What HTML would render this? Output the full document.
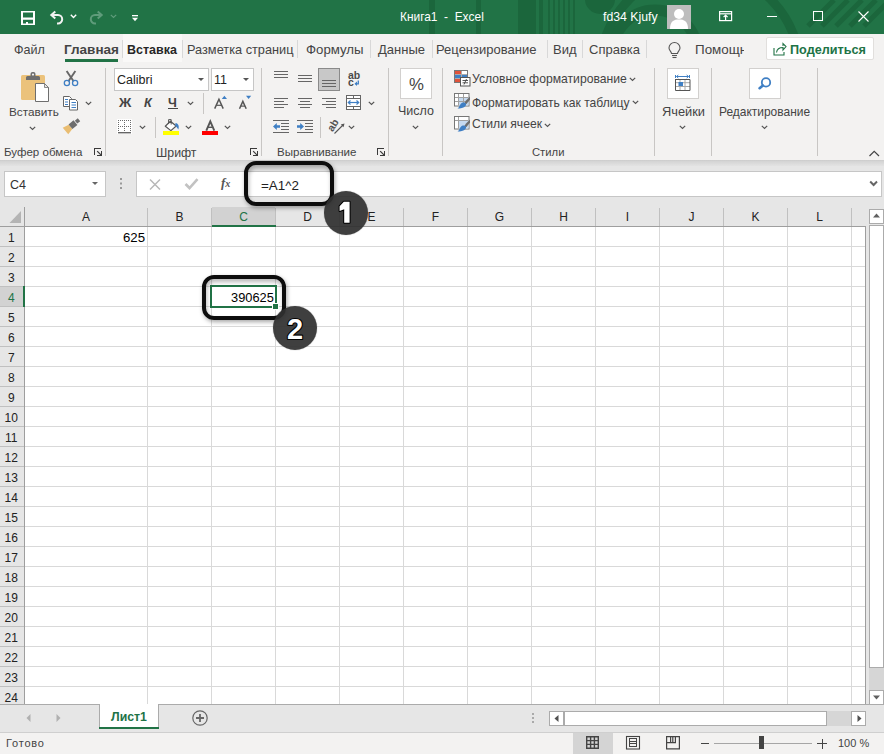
<!DOCTYPE html><html><head><meta charset="utf-8"><style>
*{margin:0;padding:0;box-sizing:border-box}
html,body{width:884px;height:754px;overflow:hidden;background:#f3f2f1;font-family:"Liberation Sans",sans-serif;position:relative}
.a{position:absolute}
.t{position:absolute;white-space:nowrap;line-height:1}
svg{position:absolute;overflow:visible}
</style></head><body>
<div class="a" style="left:0;top:0;width:884px;height:34px;background:#217346;overflow:hidden">
<svg style="left:0;top:0" width="884" height="34"><g fill="#1b663c"><rect x="429" y="0" width="6" height="34"/><rect x="476" y="0" width="5" height="34"/><rect x="518" y="0" width="18" height="34"/><rect x="539" y="0" width="4" height="34"/><rect x="548" y="0" width="2" height="34"/><rect x="553" y="0" width="2" height="34"/><rect x="558" y="0" width="2" height="34"/><rect x="563" y="0" width="2" height="34"/><rect x="568" y="0" width="2" height="34"/><rect x="573" y="0" width="2" height="34"/><circle cx="600" cy="-1" r="15"/></g><g fill="none" stroke="#1b663c"><circle cx="655" cy="52" r="42" stroke-width="11"/><circle cx="700" cy="70" r="100" stroke-width="9"/></g><g stroke="#1b663c" stroke-width="5"><line x1="808" y1="26" x2="834" y2="0"/><line x1="822" y1="26" x2="848" y2="0"/><line x1="836" y1="26" x2="862" y2="0"/><line x1="850" y1="26" x2="876" y2="0"/><line x1="864" y1="26" x2="890" y2="0"/></g></svg>
</div>
<svg style="left:21px;top:11px" width="14" height="14"><path fill="#fff" fill-rule="evenodd" d="M0 0 H14 V14 H0Z M2 1.5 H12 V6.6 H2Z M2 8.7 H12 V12.6 H7 V11 H5 V12.6 H2Z"/></svg>
<svg style="left:49px;top:10px" width="16" height="16"><g fill="none" stroke="#f2f2f2" stroke-width="2" stroke-linejoin="miter"><path d="M2.5 5 H9 A4.2 4.2 0 0 1 9 13.4 H8"/><path d="M6.3 1.5 L2.3 5 L6.3 8.5"/></g></svg>
<svg style="left:70px;top:14px" width="8" height="5"><path d="M0.8 0.8 L3.5 3.5 L6.2 0.8" fill="none" stroke="#fff" stroke-width="1.4"/></svg>
<svg style="left:88px;top:10px" width="16" height="16"><g fill="none" stroke="#5f9c7b" stroke-width="2" stroke-linejoin="miter"><path d="M13.5 5 H7 A4.2 4.2 0 0 0 7 13.4 H8"/><path d="M9.7 1.5 L13.7 5 L9.7 8.5"/></g></svg>
<svg style="left:110px;top:14px" width="8" height="5"><path d="M0.8 0.8 L3.5 3.5 L6.2 0.8" fill="none" stroke="#5f9c7b" stroke-width="1.2"/></svg>
<svg style="left:131px;top:14px" width="8" height="8"><rect x="1" y="1" width="6" height="1.3" fill="#fff"/><path d="M1 3.8 H7 L4 7.2Z" fill="#fff"/></svg>
<div class="t" style="left:400.00px;top:12.00px;font-size:11.91px;color:#fff">Книга1&nbsp; - &nbsp;Excel</div>
<div class="t" style="left:603.00px;top:11.00px;font-size:12.27px;color:#fff">fd34 Kjufy</div>
<div class="a" style="left:667px;top:5px;width:24px;height:24px;background:#bdbdbd;overflow:hidden"><svg style="left:0;top:0" width="24" height="24"><circle cx="12" cy="9" r="5" fill="#fff"/><path d="M3 24 C3 16 7 14.5 12 14.5 C17 14.5 21 16 21 24Z" fill="#fff"/></svg></div>
<svg style="left:0;top:0" width="1" height="1"><g fill="none" stroke="#fff" stroke-width="1.2"><rect x="719.6" y="11.6" width="12" height="9"/><line x1="719.6" y1="13.8" x2="731.6" y2="13.8"/><path d="M725.6 20.6 V15.2 M723.6 17.2 L725.6 15.2 L727.6 17.2"/></g></svg>
<div class="a" style="left:767px;top:16px;width:10px;height:1px;background:#fff"></div>
<div class="a" style="left:813px;top:11px;width:10px;height:10px;border:1px solid #fff"></div>
<svg style="left:858px;top:11px" width="11" height="11"><path d="M0.5 0.5 L10.5 10.5 M10.5 0.5 L0.5 10.5" stroke="#fff" stroke-width="1.1"/></svg>
<div class="a" style="left:123px;top:34px;width:59px;height:28px;background:#f9f8f7"></div>
<div class="a" style="left:122px;top:40px;width:1px;height:18px;background:#d8d8d8"></div>
<div class="a" style="left:182px;top:40px;width:1px;height:18px;background:#d8d8d8"></div>
<div class="t" style="left:14.00px;top:44.00px;font-size:12.55px;color:#444">Файл</div>
<div class="t" style="left:64.00px;top:43.00px;font-size:13.52px;color:#444;font-weight:bold">Главная</div>
<div class="a" style="left:65px;top:59px;width:53px;height:3px;background:#217346"></div>
<div class="t" style="left:127.00px;top:44.00px;font-size:12.48px;color:#262626;font-weight:bold">Вставка</div>
<div class="t" style="left:187.00px;top:44.00px;font-size:12.76px;color:#444">Разметка страниц</div>
<div class="t" style="left:306.00px;top:43.00px;font-size:13.24px;color:#444">Формулы</div>
<div class="t" style="left:378.00px;top:43.00px;font-size:13.00px;color:#444">Данные</div>
<div class="t" style="left:436.00px;top:43.00px;font-size:13.00px;color:#444">Рецензирование</div>
<div class="t" style="left:553.00px;top:43.00px;font-size:13.00px;color:#444">Вид</div>
<div class="t" style="left:589.00px;top:43.00px;font-size:13.00px;color:#444">Справка</div>
<div class="a" style="left:297px;top:40px;width:1px;height:18px;background:#d8d8d8"></div>
<div class="a" style="left:370px;top:40px;width:1px;height:18px;background:#d8d8d8"></div>
<div class="a" style="left:432px;top:40px;width:1px;height:18px;background:#d8d8d8"></div>
<div class="a" style="left:547px;top:40px;width:1px;height:18px;background:#d8d8d8"></div>
<div class="a" style="left:582px;top:40px;width:1px;height:18px;background:#d8d8d8"></div>
<div class="a" style="left:646px;top:40px;width:1px;height:18px;background:#d8d8d8"></div>
<svg style="left:667px;top:43px" width="15" height="16"><g fill="none" stroke="#555" stroke-width="1.1"><path d="M4.5 10.5 C4.5 8.5 2 7.5 2 5 A5.5 5.5 0 0 1 13 5 C13 7.5 10.5 8.5 10.5 10.5 Z"/><line x1="5" y1="12.5" x2="10" y2="12.5"/><line x1="5.5" y1="14.5" x2="9.5" y2="14.5"/></g></svg>
<div class="a" style="left:690px;top:38px;width:54px;height:22px;overflow:hidden">
<div class="t" style="left:5.00px;top:5.00px;font-size:13.42px;color:#444">Помощник</div>
</div>
<div class="a" style="left:766px;top:37px;width:108px;height:23px;background:#fff;border:1px solid #e1dfdd;border-radius:2px"></div>
<svg style="left:773px;top:43px" width="14" height="13"><g fill="none" stroke="#217346" stroke-width="1.1"><path d="M1 5 V12 H11 V9"/><path d="M3.5 9.5 C4 6 6.5 4.5 10 4.5 V7 L13 3.5 L10 0.5 V3"/></g></svg>
<div class="t" style="left:790.00px;top:44.00px;font-size:12.65px;color:#217346;font-weight:bold">Поделиться</div>
<div class="a" style="left:105px;top:68px;width:1px;height:88px;background:#c8c6c4"></div>
<div class="a" style="left:261px;top:68px;width:1px;height:88px;background:#c8c6c4"></div>
<div class="a" style="left:388px;top:68px;width:1px;height:88px;background:#c8c6c4"></div>
<div class="a" style="left:442px;top:68px;width:1px;height:88px;background:#c8c6c4"></div>
<div class="a" style="left:654px;top:68px;width:1px;height:88px;background:#c8c6c4"></div>
<div class="a" style="left:711px;top:68px;width:1px;height:88px;background:#c8c6c4"></div>
<div class="a" style="left:817px;top:68px;width:1px;height:88px;background:#c8c6c4"></div>
<div class="t" style="left:4.00px;top:147.00px;font-size:11.54px;color:#444">Буфер обмена</div>
<div class="t" style="left:156.00px;top:147.00px;font-size:12.32px;color:#444">Шрифт</div>
<div class="t" style="left:277.00px;top:147.00px;font-size:11.55px;color:#444">Выравнивание</div>
<div class="t" style="left:532.00px;top:147.00px;font-size:11.25px;color:#444">Стили</div>
<svg style="left:94px;top:148px" width="9" height="9"><g fill="#3a3a3a"><rect x="0" y="0" width="1" height="7"/><rect x="0" y="0" width="7" height="1"/><rect x="7" y="3" width="1" height="5"/><rect x="3" y="7" width="5" height="1"/></g><path d="M3.2 3.2 L7.2 7.2" stroke="#3a3a3a" stroke-width="1.2"/></svg>
<svg style="left:250px;top:148px" width="9" height="9"><g fill="#3a3a3a"><rect x="0" y="0" width="1" height="7"/><rect x="0" y="0" width="7" height="1"/><rect x="7" y="3" width="1" height="5"/><rect x="3" y="7" width="5" height="1"/></g><path d="M3.2 3.2 L7.2 7.2" stroke="#3a3a3a" stroke-width="1.2"/></svg>
<svg style="left:377px;top:148px" width="9" height="9"><g fill="#3a3a3a"><rect x="0" y="0" width="1" height="7"/><rect x="0" y="0" width="7" height="1"/><rect x="7" y="3" width="1" height="5"/><rect x="3" y="7" width="5" height="1"/></g><path d="M3.2 3.2 L7.2 7.2" stroke="#3a3a3a" stroke-width="1.2"/></svg>
<svg style="left:20px;top:71px" width="32" height="32"><rect x="1" y="4" width="24" height="25" rx="1.5" fill="#ebc27b"/><path d="M6 9 V6.5 Q6 5 7.5 5 H10.5 V3 Q10.5 1 12.5 1 H13.5 Q15.5 1 15.5 3 V5 H18.5 Q20 5 20 6.5 V9 Z" fill="#6e6e6e"/><circle cx="13" cy="3.6" r="1.1" fill="#f3f2f1"/><path d="M15.5 12.5 H24.5 L28.5 16.5 V30.5 H15.5 Z" fill="#fff" stroke="#6e6e6e" stroke-width="1"/><path d="M24.5 12.5 V16.5 H28.5 Z" fill="#e6e6e6" stroke="#6e6e6e" stroke-width="0.8"/></svg>
<div class="t" style="left:9.00px;top:106.00px;font-size:11.77px;color:#444">Вставить</div>
<svg style="left:29px;top:126px" width="8" height="5"><path d="M0.8 0.8 L3.5 3.5 L6.2 0.8" fill="none" stroke="#555" stroke-width="1.2"/></svg>
<svg style="left:55px;top:66px" width="45" height="72"><g stroke="#666" stroke-width="1.9" stroke-linecap="butt"><line x1="11.6" y1="5" x2="18.6" y2="15.2"/><line x1="20.4" y1="5" x2="13.4" y2="15.2"/></g><g fill="none" stroke="#3f7fc4" stroke-width="1.3"><circle cx="11.9" cy="17" r="2.6"/><circle cx="20.1" cy="17" r="2.6"/></g><g stroke="#666" stroke-width="1" fill="#fff"><path d="M8.5 30.5 H14.5 L16.5 32.5 V40.5 H8.5 Z"/><path d="M14.5 33.5 H20.5 L22.5 35.5 V44 H14.5 Z"/></g><g stroke="#3f7fc4" stroke-width="1"><line x1="10" y1="33.5" x2="13" y2="33.5"/><line x1="10" y1="36" x2="13" y2="36"/><line x1="10" y1="38.5" x2="13" y2="38.5"/><line x1="16.5" y1="36.5" x2="21" y2="36.5"/><line x1="16.5" y1="39" x2="21" y2="39"/><line x1="16.5" y1="41.5" x2="21" y2="41.5"/></g><g transform="translate(10.5,65) rotate(-40)"><path d="M0 -4.3 L6.5 -2.8 L6.5 2.8 L0 4.3 Z" fill="#e9bd72"/><rect x="6.5" y="-3" width="6.5" height="6" fill="#6e6e6e"/><rect x="13.8" y="-1.9" width="3.8" height="3.8" fill="#6e6e6e"/></g></svg>
<svg style="left:85px;top:101px" width="8" height="5"><path d="M0.8 0.8 L3.5 3.5 L6.2 0.8" fill="none" stroke="#555" stroke-width="1.2"/></svg>
<div class="a" style="left:114px;top:68px;width:95px;height:23px;background:#fff;border:1px solid #c6c6c6"></div>
<div class="a" style="left:211px;top:68px;width:43px;height:23px;background:#fff;border:1px solid #c6c6c6"></div>
<div class="t" style="left:117.00px;top:74.00px;font-size:12.50px;color:#222">Calibri</div>
<div class="t" style="left:214.00px;top:74.00px;font-size:12.50px;color:#222">11</div>
<svg style="left:198px;top:78px" width="7" height="4"><path d="M0 0 H6 L3 3Z" fill="#555"/></svg>
<svg style="left:243px;top:78px" width="7" height="4"><path d="M0 0 H6 L3 3Z" fill="#555"/></svg>
<div class="t" style="left:119.00px;top:97.00px;font-size:12.60px;color:#444;font-weight:bold;transform:scaleX(1.08);transform-origin:0 0">Ж</div>
<div class="t" style="left:144.00px;top:97.00px;font-size:12.60px;color:#444;font-weight:bold;font-style:italic">К</div>
<div class="t" style="left:168.00px;top:97.00px;font-size:12.60px;color:#444;font-weight:bold">Ч</div>
<div class="a" style="left:168px;top:108px;width:10px;height:1px;background:#444"></div>
<svg style="left:187px;top:101px" width="8" height="5"><path d="M0.8 0.8 L3.5 3.5 L6.2 0.8" fill="none" stroke="#555" stroke-width="1.2"/></svg>
<div class="a" style="left:203px;top:93px;width:1px;height:21px;background:#c8c6c4"></div>
<svg style="left:0;top:0" width="1" height="1"><g fill="none" stroke="#555" stroke-width="1.5"><path d="M214.7 108.6 L218.95 99.3 L223.2 108.6"/><path d="M216.3 105.3 H221.6" stroke-width="1.2"/><path d="M239.5 108.8 L242.85 101.4 L246.2 108.8"/><path d="M240.8 106.1 H244.9" stroke-width="1.2"/></g><path d="M221.8 98.9 H227 L224.4 95.8 Z" fill="#3f7fc4"/><path d="M246 95.8 H251.2 L248.6 99 Z" fill="#3f7fc4"/></svg>
<svg style="left:0;top:0" width="1" height="1"><rect x="117" y="119" width="15" height="15" fill="#fff"/><rect x="118" y="120" width="1" height="1" fill="#6a6a6a"/><rect x="118" y="122" width="1" height="1" fill="#6a6a6a"/><rect x="118" y="124" width="1" height="1" fill="#6a6a6a"/><rect x="118" y="126" width="1" height="1" fill="#6a6a6a"/><rect x="118" y="128" width="1" height="1" fill="#6a6a6a"/><rect x="118" y="130" width="1" height="1" fill="#6a6a6a"/><rect x="120" y="120" width="1" height="1" fill="#6a6a6a"/><rect x="120" y="126" width="1" height="1" fill="#6a6a6a"/><rect x="122" y="120" width="1" height="1" fill="#6a6a6a"/><rect x="122" y="126" width="1" height="1" fill="#6a6a6a"/><rect x="124" y="120" width="1" height="1" fill="#6a6a6a"/><rect x="124" y="122" width="1" height="1" fill="#6a6a6a"/><rect x="124" y="124" width="1" height="1" fill="#6a6a6a"/><rect x="124" y="126" width="1" height="1" fill="#6a6a6a"/><rect x="124" y="128" width="1" height="1" fill="#6a6a6a"/><rect x="124" y="130" width="1" height="1" fill="#6a6a6a"/><rect x="126" y="120" width="1" height="1" fill="#6a6a6a"/><rect x="126" y="126" width="1" height="1" fill="#6a6a6a"/><rect x="128" y="120" width="1" height="1" fill="#6a6a6a"/><rect x="128" y="126" width="1" height="1" fill="#6a6a6a"/><rect x="130" y="120" width="1" height="1" fill="#6a6a6a"/><rect x="130" y="122" width="1" height="1" fill="#6a6a6a"/><rect x="130" y="124" width="1" height="1" fill="#6a6a6a"/><rect x="130" y="126" width="1" height="1" fill="#6a6a6a"/><rect x="130" y="128" width="1" height="1" fill="#6a6a6a"/><rect x="130" y="130" width="1" height="1" fill="#6a6a6a"/><rect x="118" y="132" width="13" height="1.4" fill="#666"/></svg>
<svg style="left:139px;top:125px" width="8" height="5"><path d="M0.8 0.8 L3.5 3.5 L6.2 0.8" fill="none" stroke="#555" stroke-width="1.2"/></svg>
<div class="a" style="left:155px;top:117px;width:1px;height:21px;background:#c8c6c4"></div>
<svg style="left:0;top:0" width="1" height="1"><path d="M165.3 126.2 L170.4 121.2 L176.2 126 L170.9 130.6 Z" fill="#fff" stroke="#555" stroke-width="1.2" stroke-linejoin="round"/><path d="M168.6 124 V119.6 H171.2 V124.5" fill="none" stroke="#555" stroke-width="1"/><path d="M175.5 123 C178.5 123.5 179.5 126.5 178.3 129.6 C177.5 128 176.5 126.5 175.2 126 Z" fill="#3f7fc4"/><rect x="163" y="131" width="16" height="4" fill="#ffff00"/></svg>
<svg style="left:185px;top:125px" width="8" height="5"><path d="M0.8 0.8 L3.5 3.5 L6.2 0.8" fill="none" stroke="#555" stroke-width="1.2"/></svg>
<svg style="left:0;top:0" width="1" height="1"><g fill="none" stroke="#555" stroke-width="1.9"><path d="M206.3 130.6 L210.3 121.4 L214.3 130.6"/><path d="M207.8 127.3 H212.8" stroke-width="1.4"/></g></svg>
<div class="a" style="left:202px;top:131px;width:16px;height:4px;background:#ff0000"></div>
<svg style="left:224px;top:125px" width="8" height="5"><path d="M0.8 0.8 L3.5 3.5 L6.2 0.8" fill="none" stroke="#555" stroke-width="1.2"/></svg>
<svg style="left:0;top:0" width="1" height="1"><rect x="274" y="71" width="14" height="1" fill="#666"/><rect x="274" y="74" width="14" height="1" fill="#666"/><rect x="274" y="77" width="14" height="1" fill="#666"/><rect x="298" y="75" width="14" height="1" fill="#666"/><rect x="298" y="78" width="14" height="1" fill="#666"/><rect x="298" y="81" width="14" height="1" fill="#666"/><rect x="318.5" y="68.5" width="21" height="22" fill="#c8c8c8" stroke="#8a8a8a" stroke-width="1"/><rect x="322" y="80" width="14" height="1" fill="#666"/><rect x="322" y="83" width="14" height="1" fill="#666"/><rect x="322" y="86" width="14" height="1" fill="#666"/><rect x="274" y="98" width="14" height="1" fill="#666"/><rect x="298" y="98" width="14" height="1" fill="#666"/><rect x="322" y="98" width="14" height="1" fill="#666"/><rect x="274" y="101" width="10" height="1" fill="#666"/><rect x="300" y="101" width="10" height="1" fill="#666"/><rect x="326" y="101" width="10" height="1" fill="#666"/><rect x="274" y="104" width="14" height="1" fill="#666"/><rect x="298" y="104" width="14" height="1" fill="#666"/><rect x="322" y="104" width="14" height="1" fill="#666"/><rect x="274" y="107" width="10" height="1" fill="#666"/><rect x="300" y="107" width="10" height="1" fill="#666"/><rect x="326" y="107" width="10" height="1" fill="#666"/><rect x="346.5" y="95.5" width="14" height="14" fill="#fff" stroke="#666" stroke-width="1"/><rect x="346" y="98" width="15" height="1" fill="#666"/><rect x="346" y="106" width="15" height="1" fill="#666"/><rect x="353" y="95" width="1" height="3" fill="#666"/><rect x="353" y="106" width="1" height="4" fill="#666"/><g stroke="#3f7fc4" stroke-width="1.2" fill="none"><line x1="348.5" y1="102.5" x2="358.5" y2="102.5"/><path d="M350.5 100.5 L348.3 102.5 L350.5 104.5 M356.5 100.5 L358.7 102.5 L356.5 104.5"/></g></svg>
<div class="t" style="left:348.00px;top:70.00px;font-size:10.50px;color:#4a4a4a;font-weight:bold">ab</div>
<div class="t" style="left:348.00px;top:77.00px;font-size:10.50px;color:#4a4a4a;font-weight:bold">c</div>
<svg style="left:354px;top:80px" width="7" height="7"><path d="M4.3 0.5 V3.8 H1.5" fill="none" stroke="#3f7fc4" stroke-width="1.3"/><path d="M0.5 3.8 L3 1.6 V6 Z" fill="#3f7fc4"/></svg>
<svg style="left:368px;top:101px" width="8" height="5"><path d="M0.8 0.8 L3.5 3.5 L6.2 0.8" fill="none" stroke="#555" stroke-width="1.2"/></svg>
<svg style="left:0;top:0" width="1" height="1"><rect x="273" y="120" width="16" height="1" fill="#666"/><rect x="273" y="132" width="16" height="1" fill="#666"/><rect x="281" y="123" width="8" height="1" fill="#666"/><rect x="281" y="126" width="8" height="1" fill="#666"/><rect x="281" y="129" width="8" height="1" fill="#666"/><rect x="297" y="120" width="16" height="1" fill="#666"/><rect x="297" y="132" width="16" height="1" fill="#666"/><rect x="305" y="123" width="8" height="1" fill="#666"/><rect x="305" y="126" width="8" height="1" fill="#666"/><rect x="305" y="129" width="8" height="1" fill="#666"/><path d="M273 126.5 L276.8 123 V125.2 H280 V127.8 H276.8 V130 Z" fill="#3f7fc4"/><path d="M304 126.5 L300.2 123 V125.2 H297 V127.8 H300.2 V130 Z" fill="#3f7fc4"/><rect x="320" y="117" width="1" height="21" fill="#c8c6c4"/><g transform="translate(332.8,125) rotate(-58)"><text x="-6.2" y="3.8" font-family="Liberation Sans" font-weight="bold" font-size="10.5" fill="#555">ab</text></g><path d="M334.5 133.5 L343.5 124.5" stroke="#555" stroke-width="1.1"/><path d="M344.5 123.5 L340.8 124.5 L343.5 127.2 Z" fill="#555"/></svg>
<svg style="left:348px;top:125px" width="8" height="5"><path d="M0.8 0.8 L3.5 3.5 L6.2 0.8" fill="none" stroke="#555" stroke-width="1.2"/></svg>
<div class="a" style="left:400px;top:68px;width:32px;height:31px;background:#fff;border:1px solid #d2d0ce"></div>
<div class="t" style="left:409.00px;top:77.00px;font-size:16.80px;color:#444">%</div>
<div class="t" style="left:398.00px;top:105.00px;font-size:12.50px;color:#444">Число</div>
<svg style="left:412px;top:125px" width="8" height="5"><path d="M0.8 0.8 L3.5 3.5 L6.2 0.8" fill="none" stroke="#555" stroke-width="1.2"/></svg>
<svg style="left:0;top:0" width="1" height="1"><rect x="454.5" y="70.5" width="13" height="12" fill="#fff" stroke="#777" stroke-width="1"/><rect x="455" y="71" width="6" height="3.5" fill="#e0523b"/><rect x="455" y="75" width="12" height="3" fill="#3f7fc4"/><rect x="455" y="78.5" width="6" height="3.5" fill="#e0523b"/><path d="M461.5 71 V82 M455 74.5 H467 M455 78.5 H461" stroke="#aaa" stroke-width="1"/><rect x="460.5" y="77.5" width="9.5" height="8.5" fill="#fff" stroke="#555" stroke-width="1"/><path d="M462.5 80.5 H468 M462.5 82.8 H468 M466.5 79 L464 84.5" stroke="#444" stroke-width="0.9"/><rect x="454.5" y="93.5" width="14.5" height="12.5" fill="#fff" stroke="#777" stroke-width="1"/><rect x="459" y="97" width="9.5" height="8.5" fill="#c6daf0"/><path d="M455 97.5 H468.5 M455 101.5 H468.5 M458.5 94 V105.5 M463.5 94 V105.5" stroke="#a0a0a0" stroke-width="1"/><path d="M470 96.5 L466 100.5 L464 103.5 L466.5 104 L470 99.5 Z" fill="#6e6e6e"/><path d="M463 102.5 C465.5 102.5 467 104 465.5 106 C464 108 460 108.5 457.5 108.5 C459.5 107.5 460 103 463 102.5 Z" fill="#3f7fc4"/><rect x="454.5" y="116.5" width="14.5" height="12.5" fill="#fff" stroke="#777" stroke-width="1"/><rect x="459" y="120" width="9.5" height="8.5" fill="#c6daf0"/><path d="M455 120.5 H468.5 M458.5 117 V128.5" stroke="#a0a0a0" stroke-width="1"/><path d="M470 119.5 L466 123.5 L464 126.5 L466.5 127 L470 122.5 Z" fill="#6e6e6e"/><path d="M463 125.5 C465.5 125.5 467 127 465.5 129 C464 131 460 131.5 457.5 131.5 C459.5 130.5 460 126 463 125.5 Z" fill="#3f7fc4"/></svg>
<div class="t" style="left:472.00px;top:73.00px;font-size:12.18px;color:#444">Условное форматирование</div>
<svg style="left:629px;top:77px" width="8" height="5"><path d="M0.8 0.8 L3.5 3.5 L6.2 0.8" fill="none" stroke="#555" stroke-width="1.2"/></svg>
<div class="t" style="left:472.00px;top:97.00px;font-size:12.11px;color:#444">Форматировать как таблицу</div>
<svg style="left:632px;top:100px" width="8" height="5"><path d="M0.8 0.8 L3.5 3.5 L6.2 0.8" fill="none" stroke="#555" stroke-width="1.2"/></svg>
<div class="t" style="left:472.00px;top:118.00px;font-size:12.14px;color:#444">Стили ячеек</div>
<svg style="left:544px;top:123px" width="8" height="5"><path d="M0.8 0.8 L3.5 3.5 L6.2 0.8" fill="none" stroke="#555" stroke-width="1.2"/></svg>
<div class="a" style="left:667px;top:68px;width:32px;height:31px;background:#fff;border:1px solid #d2d0ce"></div>
<svg style="left:674px;top:74px" width="18" height="20"><rect x="1.5" y="5" width="14.5" height="11.5" fill="#fff"/><path d="M1.5 8.7 H16 M1.5 12.5 H16 M6 5 V16.5 M11 5 V16.5" stroke="#a8a8a8" stroke-width="1" fill="none"/><path d="M1.5 5 V16.5 H16 M1.5 5.5 H16 V16.5" stroke="#555" stroke-width="1" fill="none"/><rect x="4.5" y="8" width="4.5" height="4" fill="#3f7fc4"/><g stroke="#3f7fc4" stroke-width="1" fill="none"><path d="M2.5 2.5 H14.5 M4.3 1 L2.5 2.5 L4.3 4 M12.7 1 L14.5 2.5 L12.7 4 M1.5 1 V4 M15.5 1 V4"/></g></svg>
<div class="t" style="left:662.00px;top:106.00px;font-size:12.82px;color:#444">Ячейки</div>
<svg style="left:679px;top:125px" width="8" height="5"><path d="M0.8 0.8 L3.5 3.5 L6.2 0.8" fill="none" stroke="#555" stroke-width="1.2"/></svg>
<div class="a" style="left:749px;top:68px;width:32px;height:31px;background:#fff;border:1px solid #d2d0ce"></div>
<svg style="left:757px;top:75px" width="16" height="16"><g fill="none" stroke="#3f7fc4"><circle cx="9" cy="7.4" r="4.2" stroke-width="1.8"/><line x1="5.9" y1="10.5" x2="2.6" y2="13.2" stroke-width="2.6" stroke-linecap="round"/></g></svg>
<div class="t" style="left:719.00px;top:107.00px;font-size:11.96px;color:#444">Редактирование</div>
<svg style="left:761px;top:125px" width="8" height="5"><path d="M0.8 0.8 L3.5 3.5 L6.2 0.8" fill="none" stroke="#555" stroke-width="1.2"/></svg>
<svg style="left:868.5px;top:150px" width="11" height="7"><path d="M0.5 6 L5.2 1.3 L10 6" fill="none" stroke="#444" stroke-width="1.2"/></svg>
<div class="a" style="left:0;top:160px;width:884px;height:8px;background:linear-gradient(#cbcbcb,#d5d5d5 1.5px,#e6e6e6 7px)"></div>
<div class="a" style="left:0;top:166px;width:884px;height:41px;background:#e6e6e6"></div>
<div class="a" style="left:4px;top:171px;width:102px;height:26px;background:#fff;border:1px solid #c6c6c6"></div>
<div class="t" style="left:10.00px;top:179.00px;font-size:12.50px;color:#333">C4</div>
<svg style="left:92px;top:182px" width="7" height="4"><path d="M0 0 H6 L3 3Z" fill="#666"/></svg>
<svg style="left:120px;top:178px" width="3" height="12"><g fill="#999"><rect x="0" y="0" width="2" height="2"/><rect x="0" y="4.5" width="2" height="2"/><rect x="0" y="9" width="2" height="2"/></g></svg>
<div class="a" style="left:136px;top:171px;width:746px;height:26px;background:#fff;border:1px solid #c6c6c6"></div>
<svg style="left:149px;top:179px" width="12" height="11"><path d="M1 0.5 L11 10.5 M11 0.5 L1 10.5" stroke="#b8b8b8" stroke-width="1.5"/></svg>
<svg style="left:184px;top:178px" width="15" height="12"><path d="M1.5 6 L5.5 10 L13.5 1.2" fill="none" stroke="#c2c2c2" stroke-width="2.6"/></svg>
<div class="t" style="left:221.00px;top:176.00px;font-size:13.00px;color:#555;font-family:'Liberation Serif',serif"><b><i>f</i></b><span style="font-size:0.78em"><b><i>x</i></b></span></div>
<div class="t" style="left:261.00px;top:179.00px;font-size:13.38px;color:#222">=A1^2</div>
<svg style="left:869px;top:180px" width="10" height="7"><path d="M1.2 1.5 L4.6 5 L8 1.5" fill="none" stroke="#666" stroke-width="2"/></svg>
<div class="a" style="left:0;top:207px;width:866px;height:497px;background:#e6e6e6"></div>
<div class="a" style="left:25px;top:227px;width:841px;height:477px;background:#fff"></div>
<div class="a" style="left:147px;top:208px;width:1px;height:18px;background:#c0c0c0"></div>
<div class="a" style="left:147px;top:227px;width:1px;height:477px;background:#d9d9d9"></div>
<div class="a" style="left:211px;top:208px;width:1px;height:18px;background:#c0c0c0"></div>
<div class="a" style="left:211px;top:227px;width:1px;height:477px;background:#d9d9d9"></div>
<div class="a" style="left:275px;top:208px;width:1px;height:18px;background:#c0c0c0"></div>
<div class="a" style="left:275px;top:227px;width:1px;height:477px;background:#d9d9d9"></div>
<div class="a" style="left:339px;top:208px;width:1px;height:18px;background:#c0c0c0"></div>
<div class="a" style="left:339px;top:227px;width:1px;height:477px;background:#d9d9d9"></div>
<div class="a" style="left:403px;top:208px;width:1px;height:18px;background:#c0c0c0"></div>
<div class="a" style="left:403px;top:227px;width:1px;height:477px;background:#d9d9d9"></div>
<div class="a" style="left:467px;top:208px;width:1px;height:18px;background:#c0c0c0"></div>
<div class="a" style="left:467px;top:227px;width:1px;height:477px;background:#d9d9d9"></div>
<div class="a" style="left:531px;top:208px;width:1px;height:18px;background:#c0c0c0"></div>
<div class="a" style="left:531px;top:227px;width:1px;height:477px;background:#d9d9d9"></div>
<div class="a" style="left:595px;top:208px;width:1px;height:18px;background:#c0c0c0"></div>
<div class="a" style="left:595px;top:227px;width:1px;height:477px;background:#d9d9d9"></div>
<div class="a" style="left:659px;top:208px;width:1px;height:18px;background:#c0c0c0"></div>
<div class="a" style="left:659px;top:227px;width:1px;height:477px;background:#d9d9d9"></div>
<div class="a" style="left:723px;top:208px;width:1px;height:18px;background:#c0c0c0"></div>
<div class="a" style="left:723px;top:227px;width:1px;height:477px;background:#d9d9d9"></div>
<div class="a" style="left:787px;top:208px;width:1px;height:18px;background:#c0c0c0"></div>
<div class="a" style="left:787px;top:227px;width:1px;height:477px;background:#d9d9d9"></div>
<div class="a" style="left:851px;top:208px;width:1px;height:18px;background:#c0c0c0"></div>
<div class="a" style="left:851px;top:227px;width:1px;height:477px;background:#d9d9d9"></div>
<div class="a" style="left:25px;top:246px;width:841px;height:1px;background:#d9d9d9"></div>
<div class="a" style="left:0;top:246px;width:24px;height:1px;background:#c0c0c0"></div>
<div class="a" style="left:25px;top:266px;width:841px;height:1px;background:#d9d9d9"></div>
<div class="a" style="left:0;top:266px;width:24px;height:1px;background:#c0c0c0"></div>
<div class="a" style="left:25px;top:286px;width:841px;height:1px;background:#d9d9d9"></div>
<div class="a" style="left:0;top:286px;width:24px;height:1px;background:#c0c0c0"></div>
<div class="a" style="left:25px;top:306px;width:841px;height:1px;background:#d9d9d9"></div>
<div class="a" style="left:0;top:306px;width:24px;height:1px;background:#c0c0c0"></div>
<div class="a" style="left:25px;top:326px;width:841px;height:1px;background:#d9d9d9"></div>
<div class="a" style="left:0;top:326px;width:24px;height:1px;background:#c0c0c0"></div>
<div class="a" style="left:25px;top:346px;width:841px;height:1px;background:#d9d9d9"></div>
<div class="a" style="left:0;top:346px;width:24px;height:1px;background:#c0c0c0"></div>
<div class="a" style="left:25px;top:366px;width:841px;height:1px;background:#d9d9d9"></div>
<div class="a" style="left:0;top:366px;width:24px;height:1px;background:#c0c0c0"></div>
<div class="a" style="left:25px;top:386px;width:841px;height:1px;background:#d9d9d9"></div>
<div class="a" style="left:0;top:386px;width:24px;height:1px;background:#c0c0c0"></div>
<div class="a" style="left:25px;top:406px;width:841px;height:1px;background:#d9d9d9"></div>
<div class="a" style="left:0;top:406px;width:24px;height:1px;background:#c0c0c0"></div>
<div class="a" style="left:25px;top:426px;width:841px;height:1px;background:#d9d9d9"></div>
<div class="a" style="left:0;top:426px;width:24px;height:1px;background:#c0c0c0"></div>
<div class="a" style="left:25px;top:446px;width:841px;height:1px;background:#d9d9d9"></div>
<div class="a" style="left:0;top:446px;width:24px;height:1px;background:#c0c0c0"></div>
<div class="a" style="left:25px;top:466px;width:841px;height:1px;background:#d9d9d9"></div>
<div class="a" style="left:0;top:466px;width:24px;height:1px;background:#c0c0c0"></div>
<div class="a" style="left:25px;top:486px;width:841px;height:1px;background:#d9d9d9"></div>
<div class="a" style="left:0;top:486px;width:24px;height:1px;background:#c0c0c0"></div>
<div class="a" style="left:25px;top:506px;width:841px;height:1px;background:#d9d9d9"></div>
<div class="a" style="left:0;top:506px;width:24px;height:1px;background:#c0c0c0"></div>
<div class="a" style="left:25px;top:526px;width:841px;height:1px;background:#d9d9d9"></div>
<div class="a" style="left:0;top:526px;width:24px;height:1px;background:#c0c0c0"></div>
<div class="a" style="left:25px;top:546px;width:841px;height:1px;background:#d9d9d9"></div>
<div class="a" style="left:0;top:546px;width:24px;height:1px;background:#c0c0c0"></div>
<div class="a" style="left:25px;top:566px;width:841px;height:1px;background:#d9d9d9"></div>
<div class="a" style="left:0;top:566px;width:24px;height:1px;background:#c0c0c0"></div>
<div class="a" style="left:25px;top:586px;width:841px;height:1px;background:#d9d9d9"></div>
<div class="a" style="left:0;top:586px;width:24px;height:1px;background:#c0c0c0"></div>
<div class="a" style="left:25px;top:606px;width:841px;height:1px;background:#d9d9d9"></div>
<div class="a" style="left:0;top:606px;width:24px;height:1px;background:#c0c0c0"></div>
<div class="a" style="left:25px;top:626px;width:841px;height:1px;background:#d9d9d9"></div>
<div class="a" style="left:0;top:626px;width:24px;height:1px;background:#c0c0c0"></div>
<div class="a" style="left:25px;top:646px;width:841px;height:1px;background:#d9d9d9"></div>
<div class="a" style="left:0;top:646px;width:24px;height:1px;background:#c0c0c0"></div>
<div class="a" style="left:25px;top:666px;width:841px;height:1px;background:#d9d9d9"></div>
<div class="a" style="left:0;top:666px;width:24px;height:1px;background:#c0c0c0"></div>
<div class="a" style="left:25px;top:686px;width:841px;height:1px;background:#d9d9d9"></div>
<div class="a" style="left:0;top:686px;width:24px;height:1px;background:#c0c0c0"></div>
<div class="a" style="left:25px;top:706px;width:841px;height:1px;background:#d9d9d9"></div>
<div class="a" style="left:0;top:706px;width:24px;height:1px;background:#c0c0c0"></div>
<div class="a" style="left:0;top:226px;width:866px;height:1px;background:#9e9e9e"></div>
<div class="a" style="left:24px;top:207px;width:1px;height:497px;background:#9e9e9e"></div>
<div class="a" style="left:865px;top:226px;width:1px;height:478px;background:#9e9e9e"></div>
<svg style="left:0;top:207px" width="24" height="19"><polygon points="9.5,16 21,4 21,16" fill="#b4b4b4"/></svg>
<div class="a" style="left:212px;top:207px;width:63px;height:19px;background:#d2d2d2"></div>
<div class="a" style="left:212px;top:225px;width:64px;height:2px;background:#217346"></div>
<div class="a" style="left:0;top:287px;width:24px;height:19px;background:#d2d2d2"></div>
<div class="a" style="left:23px;top:286px;width:2px;height:21px;background:#217346"></div>
<div class="t" style="left:25px;top:211px;width:122px;text-align:center;font-size:12px;color:#222">A</div>
<div class="t" style="left:148px;top:211px;width:63px;text-align:center;font-size:12px;color:#222">B</div>
<div class="t" style="left:212px;top:211px;width:63px;text-align:center;font-size:12px;color:#217346">C</div>
<div class="t" style="left:276px;top:211px;width:63px;text-align:center;font-size:12px;color:#222">D</div>
<div class="t" style="left:340px;top:211px;width:63px;text-align:center;font-size:12px;color:#222">E</div>
<div class="t" style="left:404px;top:211px;width:63px;text-align:center;font-size:12px;color:#222">F</div>
<div class="t" style="left:468px;top:211px;width:63px;text-align:center;font-size:12px;color:#222">G</div>
<div class="t" style="left:532px;top:211px;width:63px;text-align:center;font-size:12px;color:#222">H</div>
<div class="t" style="left:596px;top:211px;width:63px;text-align:center;font-size:12px;color:#222">I</div>
<div class="t" style="left:660px;top:211px;width:63px;text-align:center;font-size:12px;color:#222">J</div>
<div class="t" style="left:724px;top:211px;width:63px;text-align:center;font-size:12px;color:#222">K</div>
<div class="t" style="left:788px;top:211px;width:63px;text-align:center;font-size:12px;color:#222">L</div>
<div class="t" style="left:0;top:232px;width:22.5px;text-align:center;font-size:12px;color:#222">1</div>
<div class="t" style="left:0;top:252px;width:22.5px;text-align:center;font-size:12px;color:#222">2</div>
<div class="t" style="left:0;top:272px;width:22.5px;text-align:center;font-size:12px;color:#222">3</div>
<div class="t" style="left:0;top:292px;width:22.5px;text-align:center;font-size:12px;color:#217346">4</div>
<div class="t" style="left:0;top:312px;width:22.5px;text-align:center;font-size:12px;color:#222">5</div>
<div class="t" style="left:0;top:332px;width:22.5px;text-align:center;font-size:12px;color:#222">6</div>
<div class="t" style="left:0;top:352px;width:22.5px;text-align:center;font-size:12px;color:#222">7</div>
<div class="t" style="left:0;top:372px;width:22.5px;text-align:center;font-size:12px;color:#222">8</div>
<div class="t" style="left:0;top:392px;width:22.5px;text-align:center;font-size:12px;color:#222">9</div>
<div class="t" style="left:0;top:412px;width:22.5px;text-align:center;font-size:12px;color:#222">10</div>
<div class="t" style="left:0;top:432px;width:22.5px;text-align:center;font-size:12px;color:#222">11</div>
<div class="t" style="left:0;top:452px;width:22.5px;text-align:center;font-size:12px;color:#222">12</div>
<div class="t" style="left:0;top:472px;width:22.5px;text-align:center;font-size:12px;color:#222">13</div>
<div class="t" style="left:0;top:492px;width:22.5px;text-align:center;font-size:12px;color:#222">14</div>
<div class="t" style="left:0;top:512px;width:22.5px;text-align:center;font-size:12px;color:#222">15</div>
<div class="t" style="left:0;top:532px;width:22.5px;text-align:center;font-size:12px;color:#222">16</div>
<div class="t" style="left:0;top:552px;width:22.5px;text-align:center;font-size:12px;color:#222">17</div>
<div class="t" style="left:0;top:572px;width:22.5px;text-align:center;font-size:12px;color:#222">18</div>
<div class="t" style="left:0;top:592px;width:22.5px;text-align:center;font-size:12px;color:#222">19</div>
<div class="t" style="left:0;top:612px;width:22.5px;text-align:center;font-size:12px;color:#222">20</div>
<div class="t" style="left:0;top:632px;width:22.5px;text-align:center;font-size:12px;color:#222">21</div>
<div class="t" style="left:0;top:652px;width:22.5px;text-align:center;font-size:12px;color:#222">22</div>
<div class="t" style="left:0;top:672px;width:22.5px;text-align:center;font-size:12px;color:#222">23</div>
<div class="t" style="left:0;top:692px;width:22.5px;text-align:center;font-size:12px;color:#222">24</div>
<div class="t" style="left:123.00px;top:231.00px;font-size:13.23px;color:#000">625</div>
<div class="t" style="left:231.00px;top:292.00px;font-size:12.82px;color:#000">390625</div>
<div class="a" style="left:210px;top:285px;width:67px;height:23px;border:2px solid #217346"></div>
<div class="a" style="left:272px;top:303px;width:7px;height:7px;background:#217346;border:1px solid #fff"></div>
<div class="a" style="left:866px;top:207px;width:18px;height:497px;background:#e6e6e6"></div>
<div class="a" style="left:869px;top:209px;width:15px;height:15px;background:#fff;border:1px solid #ababab"></div>
<svg style="left:873px;top:213px" width="8" height="5"><path d="M0 4.5 H7 L3.5 0.5Z" fill="#606060"/></svg>
<div class="a" style="left:869px;top:225px;width:15px;height:443px;background:#fff;border:1px solid #ababab"></div>
<div class="a" style="left:869px;top:668px;width:15px;height:22px;background:#d6d6d6"></div>
<div class="a" style="left:869px;top:690px;width:15px;height:15px;background:#fff;border:1px solid #ababab"></div>
<svg style="left:873px;top:695px" width="8" height="5"><path d="M0 0.5 H7 L3.5 4.5Z" fill="#606060"/></svg>
<div class="a" style="left:0;top:704px;width:884px;height:29px;background:#e6e6e6;border-top:1px solid #ababab;border-bottom:1px solid #cfcfcf"></div>
<svg style="left:25.5px;top:713.5px" width="5" height="9"><path d="M4.5 0 V8 L0.5 4Z" fill="#b0b0b0"/></svg>
<svg style="left:55.5px;top:713.5px" width="5" height="9"><path d="M0.5 0 V8 L4.5 4Z" fill="#b0b0b0"/></svg>
<div class="a" style="left:99px;top:704px;width:60px;height:24px;background:#fff;border-left:1px solid #ababab;border-right:1px solid #ababab"></div>
<div class="a" style="left:99px;top:727px;width:60px;height:2px;background:#217346"></div>
<div class="t" style="left:111.00px;top:711.00px;font-size:12.30px;color:#217346;font-weight:bold">Лист1</div>
<svg style="left:191px;top:709px" width="18" height="18"><g fill="none" stroke="#666"><circle cx="9" cy="9" r="7.2" stroke-width="1.2"/><path d="M9 5 V13 M5 9 H13" stroke-width="1.8"/></g></svg>
<svg style="left:532px;top:713px" width="3" height="11"><g fill="#aaa"><rect x="0" y="0" width="2" height="2"/><rect x="0" y="4" width="2" height="2"/><rect x="0" y="8" width="2" height="2"/></g></svg>
<div class="a" style="left:549px;top:711px;width:15px;height:15px;background:#fff;border:1px solid #ababab"></div>
<div class="a" style="left:564px;top:711px;width:263px;height:15px;background:#fff;border:1px solid #ababab"></div>
<div class="a" style="left:827px;top:711px;width:24px;height:15px;background:#d6d6d6"></div>
<div class="a" style="left:851px;top:711px;width:15px;height:15px;background:#fff;border:1px solid #ababab"></div>
<svg style="left:554px;top:715px" width="5" height="8"><path d="M4.5 0 V7 L0.5 3.5Z" fill="#505050"/></svg>
<svg style="left:857px;top:715px" width="5" height="8"><path d="M0.5 0 V7 L4.5 3.5Z" fill="#505050"/></svg>
<div class="a" style="left:0;top:733px;width:884px;height:21px;background:#f3f2f1"></div>
<div class="t" style="left:6.00px;top:738.00px;font-size:11.00px;color:#444;letter-spacing:0.8px">Готово</div>
<div class="a" style="left:573px;top:733px;width:40px;height:21px;background:#d4d4d4"></div>
<svg style="left:0;top:0" width="1" height="1"><g fill="none" stroke="#444" stroke-width="1.4"><path d="M586.7 736.7 H598.3 V748.3 H586.7 Z M586.7 740.6 H598.3 M586.7 744.4 H598.3 M590.6 736.7 V748.3 M594.4 736.7 V748.3"/><rect x="626.5" y="736.5" width="13" height="12.5" stroke-width="1.1"/><rect x="629.5" y="738.5" width="7" height="8" stroke-width="1"/><path d="M630 741.5 H636 M630 743.5 H636" stroke-width="1"/><path d="M666.6 736.6 H679.4 V748.9 H666.6 Z M666.6 742.6 H675.4 V736.6 M670.6 736.6 V742.6 M672.8 736.6 V742.6" stroke-width="1.2"/></g></svg>
<div class="a" style="left:701px;top:743px;width:8px;height:1px;background:#444"></div>
<div class="a" style="left:714px;top:743px;width:98px;height:1px;background:#a6a6a6"></div>
<div class="a" style="left:759px;top:736px;width:5px;height:13px;background:#444"></div>
<div class="a" style="left:817px;top:743px;width:10px;height:1px;background:#444"></div>
<div class="a" style="left:821.5px;top:738.5px;width:1px;height:10px;background:#444"></div>
<div class="t" style="left:838.00px;top:738.00px;font-size:11.00px;color:#444">100 %</div>
<div class="a" style="left:244px;top:161px;width:90px;height:45px;border:4px solid #0d0d0d;border-radius:12px;box-shadow:1px 2px 4px rgba(0,0,0,.35), inset 1px 3px 4px rgba(0,0,0,.28)"></div>
<div class="a" style="left:202px;top:275px;width:84px;height:45px;border:4px solid #0d0d0d;border-radius:12px;box-shadow:1px 2px 4px rgba(0,0,0,.35), inset 1px 3px 4px rgba(0,0,0,.28)"></div>
<div class="a" style="left:324px;top:191px;width:44px;height:44px;border-radius:50%;background:rgba(48,48,48,.93);box-shadow:0 0 1px rgba(0,0,0,.5)"></div>
<svg style="left:324px;top:191px" width="44" height="44"><path d="M19.8 10.8 H25.6 V31.8 H20.2 V18.2 L15.6 20 V15.2 Z" fill="#fff" stroke="#000" stroke-width="2" paint-order="stroke" stroke-linejoin="round"/></svg>
<div class="a" style="left:273px;top:306px;width:44px;height:44px;border-radius:50%;background:rgba(48,48,48,.93);box-shadow:0 0 1px rgba(0,0,0,.5)"></div>
<svg style="left:273px;top:306px" width="44" height="44"><text x="22" y="32.5" text-anchor="middle" font-family="Liberation Sans" font-weight="bold" font-size="29" fill="#fff" stroke="#000" stroke-width="2.2" paint-order="stroke" stroke-linejoin="round">2</text></svg>
</body></html>
